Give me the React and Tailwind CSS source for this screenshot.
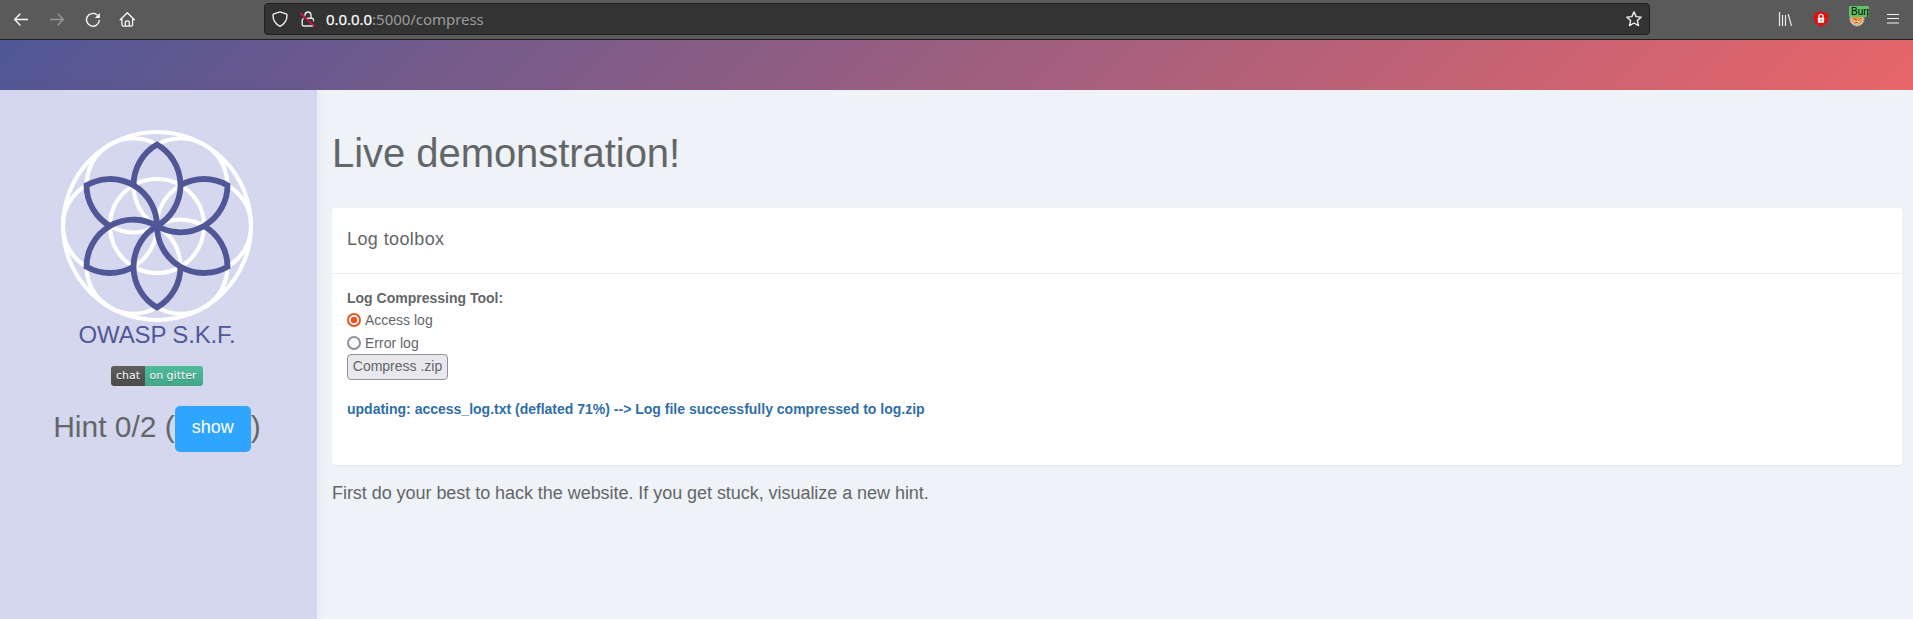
const ANGLES = [0, 60, 120, 180, 240, 300];
const R = 47;
const H = R * 0.866;

function Logo() {
  return (
    <svg className="block size-[196px]" viewBox="-98 -98 196 196" fill="none">
      <g stroke="#fff" strokeWidth="4">
        <circle r={R * 2} />
        <circle r={R} />
        {ANGLES.map((a) => (
          <circle key={a} cx={R} r={R} transform={`rotate(${a})`} />
        ))}
      </g>
      <g stroke="#505796" strokeWidth="5.8" strokeLinejoin="miter">
        {ANGLES.map((a) => (
          <path
            key={a}
            transform={`rotate(${a})`}
            d={`M${-R / 2} ${-H}A${R} ${R} 0 0 1 0 ${-2 * H}A${R} ${R} 0 0 1 0 0`}
          />
        ))}
      </g>
    </svg>
  );
}

function Toolbar() {
  return (
    <div className="flex h-10 items-start border-b border-[#1f1f1f] bg-[#5a5a5a] pt-[3px]">
      <div className="flex w-[264px] gap-5 pl-[13px] pt-[8px] text-[#f9f9fa]">
        <svg className="size-4" viewBox="0 0 16 16" fill="none" stroke="currentColor" strokeWidth="1.4" strokeLinecap="round" strokeLinejoin="round">
          <path d="M14.500 8.500H1.800M7 3.100 1.600 8.500l5.400 5.400" />
        </svg>
        <svg className="size-4 text-[#979797]" viewBox="0 0 16 16" fill="none" stroke="currentColor" strokeWidth="1.4" strokeLinecap="round" strokeLinejoin="round">
          <path d="M1.500 8.500h12.700M9 3.100l5.400 5.400L9 13.900" />
        </svg>
        <svg className="size-4" viewBox="0 0 16 16" fill="none" stroke="currentColor" strokeWidth="1.4" strokeLinecap="round">
          <path d="M11.800 3.700A6.400 6.400 0 1 0 14.300 9.500" />
          <path d="M14.800 2v5H9.800z" fill="currentColor" stroke="none" />
        </svg>
        <svg className="size-4 -ml-0.5" viewBox="0 0 16 16" fill="none" stroke="currentColor" strokeWidth="1.3" strokeLinecap="round" strokeLinejoin="round">
          <path d="M1.200 8.800 8.300 1.700l7.100 7.100M2.900 7.600v6q0 1.600 1.600 1.600h7.500q1.600 0 1.600-1.600v-6M6.300 15v-3.600q0-1.600 2-1.600t2 1.600V15" />
        </svg>
      </div>
      <div className="flex h-8 w-[1386px] items-center rounded border border-[#1f1f1f] bg-[#333] px-[7px]">
        <svg className="size-4 text-[#f0f0f0]" viewBox="0 0 16 16" fill="none" stroke="currentColor" strokeWidth="1.4" strokeLinejoin="round">
          <path d="M8 .9 1.900 2.900Q1 3.300 1 4.300C1 9 3.300 13 8 15.300c4.700-2.300 7-6.300 7-11q0-1-.9-1.400z" />
        </svg>
        <svg className="ml-3 size-4" viewBox="0 0 16 16" fill="none" stroke="#e8e8e8" strokeWidth="1.4" strokeLinecap="round">
          <path d="M5 4.200Q5 1 8 1t3 3.200v3M7.500 7.300h4.500q1.500 0 1.500 1.500v1M3.200 7.800q-1 .3-1 1.300V13.500q0 1.500 1.500 1.500h8.800" />
          <path d="M1 2.600 14 15" stroke="#e2134a" strokeWidth="1.5" />
        </svg>
        <div className="ml-[10px] flex-1 whitespace-nowrap font-['Noto_Sans',sans-serif] text-[15px] leading-5 tracking-[-0.04px] text-[#9b9b9b]">
          <span className="text-[#f9f9fa] [-webkit-text-stroke:0.25px_#f9f9fa]">0.0.0.0</span>:5000/compress
        </div>
        <svg className="size-4" viewBox="0 0 16 16" fill="none" stroke="#f0f0f0" strokeWidth="1.4" strokeLinejoin="round">
          <path d="m8 .9 2.100 4.700 5.100.5-3.800 3.500 1.100 5L8 12l-4.500 2.600 1.100-5L.8 6.100l5.100-.5z" />
        </svg>
      </div>
      <div className="flex flex-1 pl-[128px] pt-2">
        <svg className="size-4" viewBox="0 0 16 16" stroke="#e8e8e8" strokeWidth="1.2">
          <path d="M1.500 1v14M4.500 4v11M7.500 4v11M10.200 3.200 13.500 14.800" />
        </svg>
        <svg className="ml-[19px] size-4" viewBox="0 0 16 16">
          <path d="M8 0q3 2 7.200 2.200V7q0 6-7.200 9Q.8 13 .8 7V2.200Q5 2 8 0" fill="#e0110f" />
          <path d="M5.900 7V5.500a2.100 2.100 0 0 1 4.200 0V7" fill="none" stroke="#fff" strokeWidth="1.3" />
          <rect x="4.900" y="6.700" width="6.200" height="5.100" rx=".5" fill="#fff" />
          <rect x="7.600" y="8.200" width=".9" height="2" fill="#e0110f" />
        </svg>
        <div className="relative ml-5 size-4">
          <svg className="size-4" viewBox="0 0 16 16">
            <circle cx="8" cy="8" r="7.200" fill="#d9d5cf" stroke="#8f8b86" />
            <circle cx="8" cy="8" r="5.600" fill="#ee8f35" />
            <path d="m3 7 4 3 5-4-1 5-3 2-3-1z" fill="#f7c08c" />
            <path d="M4.500 7.500 8 9.500M9 10l3-3M6 11.500h3" stroke="#7a4a24" strokeWidth=".8" />
          </svg>
          <div className="absolute left-0 top-[-5px] h-[11px] w-5 overflow-hidden rounded-[1px] bg-[#5fc465] pl-0.5 font-['Liberation_Sans',sans-serif] text-[10px] leading-[11px] text-black">
            Burp
          </div>
        </div>
        <svg className="ml-[21px] size-4" viewBox="0 0 16 16" stroke="#f4f4f4" strokeWidth="1.2">
          <path d="M1 3.500h12M1 7.500h12M1 12h12" />
        </svg>
      </div>
    </div>
  );
}

function Radio({ checked, label }) {
  return (
    <label className="flex h-[23px] items-center gap-1 pt-px">
      <svg className="size-[14px]" viewBox="0 0 14 14">
        <circle cx="7" cy="7" r="6" fill="#fff" stroke={checked ? "#e95420" : "#8f8f9d"} strokeWidth="2" />
        {checked && <circle cx="7" cy="7" r="3.2" fill="#e95420" />}
      </svg>
      {label}
    </label>
  );
}

export default function App() {
  return (
    <div className="flex h-[619px] w-[1913px] flex-col overflow-hidden bg-[#eff3f7] font-['Liberation_Sans',Arial,sans-serif] text-sm leading-5 text-[#636669]">
      <Toolbar />
      <header className="h-[50px] shrink-0 bg-[linear-gradient(135deg,#505796_0%,#e86669_100%)]" />
      <div className="flex flex-1">
        <aside className="flex w-[317px] shrink-0 flex-col items-center bg-[#d5d7ee] pr-[3px] pt-[38px] shadow-[0_0_14px_rgba(0,0,0,0.06)]">
          <Logo />
          <div className="-mt-0.5 text-2xl leading-[26px] tracking-[-0.15px] text-[#505796]">OWASP S.K.F.</div>
          <div className="mt-[18px] flex h-5 overflow-hidden rounded-[3px] font-['DejaVu_Sans',sans-serif] text-[11px] leading-5 text-white [text-shadow:0_1px_0_rgba(1,1,1,0.3)]">
            <span className="w-[34px] bg-linear-to-b from-[#5f5f5f] to-[#4b4b4b] text-center">chat</span>
            <span className="w-[58px] bg-linear-to-b from-[#50bb9b] to-[#40a888] pr-0.5 text-center">on gitter</span>
          </div>
          <div className="mt-5 flex h-[46px] items-center text-[30px]">
            <span className="whitespace-nowrap pb-[5px]">Hint 0/2 (</span>
            <button className="h-[46px] w-[76px] rounded-[5px] bg-[#30a5ff] pb-1 text-lg leading-6 text-white">show</button>
            <span className="pb-[5px]">)</span>
          </div>
        </aside>
        <main className="flex-1 pl-[15px] pr-[11px] pt-[41px]">
          <h1 className="text-[40px] leading-[44px] tracking-[-0.05px]">Live demonstration!</h1>
          <section className="mt-[33px] h-[257px] rounded bg-white shadow-[0_1px_1px_rgba(0,0,0,0.05)]">
            <h2 className="h-[66px] border-b border-[#e9ecf0] px-[15px] pt-[21px] text-lg leading-5 tracking-[0.4px]">Log toolbox</h2>
            <div className="px-[15px] pt-[14px]">
              <div className="h-5 font-bold">Log Compressing Tool:</div>
              <Radio checked label="Access log" />
              <Radio label="Error log" />
              <button className="block h-[26px] w-[101px] rounded border border-[#8f8f9d] bg-[#e9e9ed] pb-0.5 leading-5">
                Compress .zip
              </button>
              <div className="mt-[19px] font-bold text-[#306ea8]">
                updating: access_log.txt (deflated 71%) --&gt; Log file successfully compressed to log.zip
              </div>
            </div>
          </section>
          <p className="mt-[18px] text-lg leading-5 tracking-[-0.045px]">First do your best to hack the website. If you get stuck, visualize a new hint.</p>
        </main>
      </div>
    </div>
  );
}
